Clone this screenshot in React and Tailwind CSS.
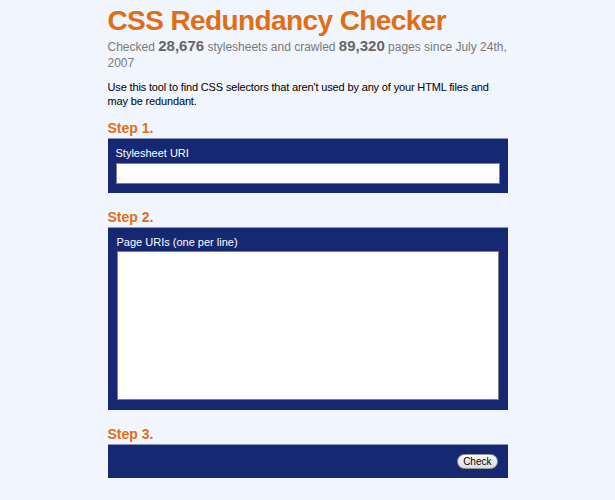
export default function App() {
  return (
    <div className="min-h-[500px] bg-[#f0f5fe] font-['Liberation_Sans',Arial,sans-serif]">
      <div className="mx-auto w-[400px] pt-[5px]">
        <h1 className="text-[28px] font-bold leading-[32px] tracking-[-0.6px] text-[#e06e17]">
          CSS Redundancy Checker
        </h1>
        <p className="mt-[1px] text-[12px] leading-[16px] text-[#7a7a7a]">
          Checked <b className="text-[15px] leading-none text-[#666]">28,676</b> stylesheets and crawled{" "}
          <b className="text-[15px] leading-none text-[#666]">89,320</b> pages since July 24th, 2007
        </p>
        <p className="mt-[9px] text-[11px] leading-[14px] tracking-[-0.15px] text-black">
          Use this tool to find CSS selectors that aren't used by any of your HTML files and may be redundant.
        </p>

        <h2 className="mt-[12px] text-[14px] font-bold leading-[17px] text-[#e06e17]">Step 1.</h2>
        <div className="mt-[1px] border-t border-[#8a93b8] bg-[#172873] px-[8px] pb-[9px] pt-[7px]">
          <label className="block text-[11px] leading-[14px] text-white">Stylesheet URI</label>
          <input
            type="text"
            className="mt-[3px] block h-[21px] w-full border border-[#7d7d8f] bg-white"
          />
        </div>

        <h2 className="mt-[16px] text-[14px] font-bold leading-[17px] text-[#e06e17]">Step 2.</h2>
        <div className="mt-[1px] border-t border-[#8a93b8] bg-[#172873] px-[9px] pb-[10px] pt-[7px]">
          <label className="block text-[11px] leading-[14px] text-white">Page URIs (one per line)</label>
          <textarea className="mt-[2px] block h-[149px] w-full resize-none border border-[#7d7d8f] bg-white" />
        </div>

        <h2 className="mt-[16px] text-[14px] font-bold leading-[17px] text-[#e06e17]">Step 3.</h2>
        <div className="mt-[1px] flex h-[34px] items-center justify-end border-t border-[#8a93b8] bg-[#172873] px-[10px]">
          <button className="h-[15px] rounded-full border border-[#999] bg-gradient-to-b from-white to-[#dcdcdc] px-[5px] text-[10px] leading-[13px] text-black">
            Check
          </button>
        </div>
      </div>
    </div>
  );
}
